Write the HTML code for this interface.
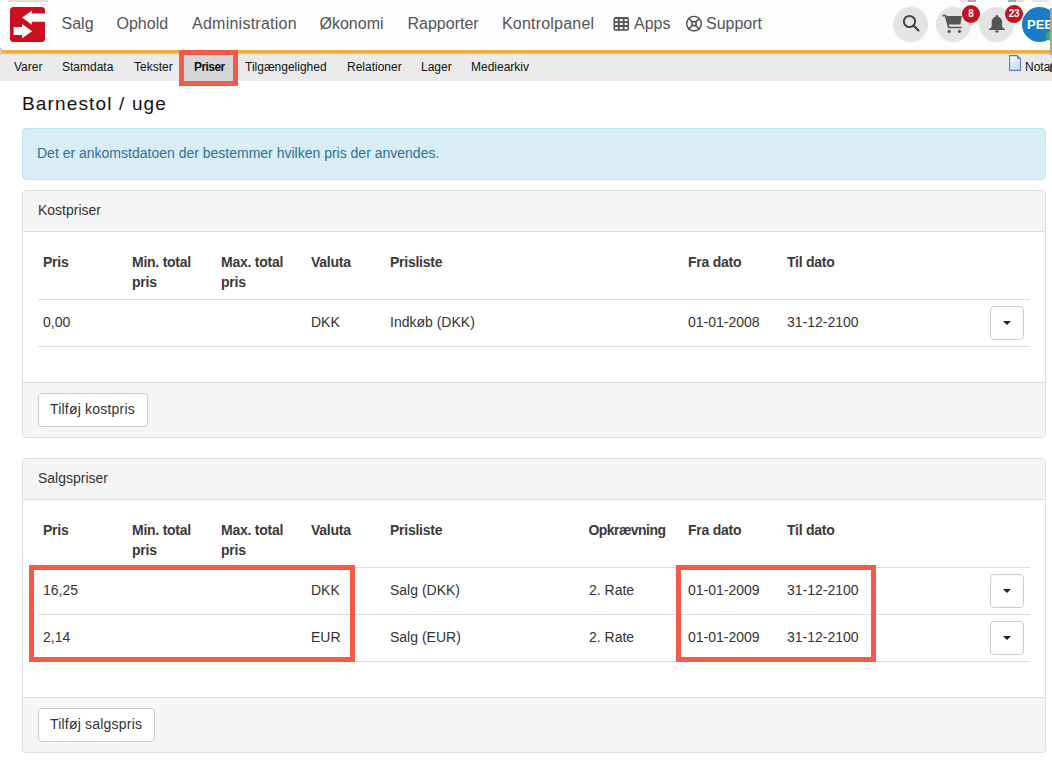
<!DOCTYPE html>
<html><head><meta charset="utf-8">
<style>
*{margin:0;padding:0;box-sizing:border-box}
html,body{width:1052px;height:764px;overflow:hidden;background:#fff;font-family:"Liberation Sans",sans-serif;color:#333;position:relative}
.a{position:absolute;white-space:nowrap}
.nav{font-size:16px;color:#555;line-height:20px;top:14px!important}
.sub{font-size:12px;color:#111;line-height:16px}
.t{font-size:14px;line-height:20px;color:#333}
.b{font-weight:bold;letter-spacing:-0.25px;color:#3a3a3a}
.circ{position:absolute;border-radius:50%;background:#e4e4e4;width:35px;height:35px}
.badge{position:absolute;border-radius:50%;background:#c8101e;width:18px;height:18px;color:#fff;font-size:10px;font-weight:bold;text-align:center;line-height:17px;letter-spacing:-0.2px}
.panel{position:absolute;left:22px;width:1024px;border:1px solid #ddd;border-radius:4px;background:#fff;overflow:hidden}
.ph{position:absolute;left:0;top:0;width:100%;background:#f5f5f5;border-bottom:1px solid #ddd}
.pf{position:absolute;left:0;width:100%;background:#f5f5f5;border-top:1px solid #ddd}
.hl{position:absolute;left:15px;width:992px;height:1px;background:#ddd}
.btn{position:absolute;border:1px solid #ccc;border-radius:4px;background:#fff}
.caret{position:absolute;left:12px;top:14px;width:0;height:0;border-left:4px solid transparent;border-right:4px solid transparent;border-top:4px solid #222}
.red{position:absolute;border:5px solid #f35a48}
</style></head><body>
<!-- top nav -->
<div class="a" style="left:0;top:0;width:1052px;height:50px;background:#fdfdfd"></div>
<svg class="a" style="left:10px;top:7px" width="35" height="35" viewBox="0 0 35 35">
<rect width="35" height="35" rx="3.5" fill="#c8101e"/>
<path d="M12.1 10.6 L21.8 3.8 L21.8 6.5 L35 6.5 L35 14.7 L21.8 14.7 L21.8 17.7 Z" fill="#fff"/>
<path d="M3.6 20 L12.1 20 L12.1 17.1 L22.1 24.2 L12.1 31.2 L12.1 28 L3.6 28 Z" fill="#fff"/>
</svg>
<div class="a nav" style="left:61.5px;top:13px">Salg</div>
<div class="a nav" style="left:116.5px;top:13px">Ophold</div>
<div class="a nav" style="left:192px;top:13px;letter-spacing:0.25px">Administration</div>
<div class="a nav" style="left:319.5px;top:13px">Økonomi</div>
<div class="a nav" style="left:407.5px;top:13px">Rapporter</div>
<div class="a nav" style="left:502px;top:13px;letter-spacing:0.2px">Kontrolpanel</div>
<svg class="a" style="left:613px;top:16px" width="17" height="16" viewBox="0 0 17 16">
<rect x="0.5" y="1" width="15.5" height="13.8" rx="2" fill="#555"/>
<g fill="#fdfdfd"><rect x="2" y="3" width="3" height="2.2" rx="0.6"/><rect x="6.8" y="3" width="3" height="2.2" rx="0.6"/><rect x="11.5" y="3" width="3" height="2.2" rx="0.6"/>
<rect x="2" y="6.9" width="3" height="2.2" rx="0.6"/><rect x="6.8" y="6.9" width="3" height="2.2" rx="0.6"/><rect x="11.5" y="6.9" width="3" height="2.2" rx="0.6"/>
<rect x="2" y="11" width="3" height="2.2" rx="0.6"/><rect x="6.8" y="11" width="3" height="2.2" rx="0.6"/><rect x="11.5" y="11" width="3" height="2.2" rx="0.6"/></g>
</svg>
<div class="a nav" style="left:634px;top:13px">Apps</div>
<svg class="a" style="left:685px;top:15px" width="18" height="18" viewBox="0 0 18 18">
<circle cx="9" cy="8.7" r="7.3" fill="none" stroke="#505050" stroke-width="1.4"/>
<circle cx="9" cy="8.7" r="2.15" fill="none" stroke="#505050" stroke-width="1.5"/>
<path d="M3.8 3.5L7.4 7.1M14.2 3.5L10.6 7.1M3.8 13.9L7.4 10.3M14.2 13.9L10.6 10.3" stroke="#505050" stroke-width="1.5" stroke-linecap="square"/>
</svg>
<div class="a nav" style="left:706px;top:13px">Support</div>

<div class="circ" style="left:893px;top:7px"></div>
<svg class="a" style="left:893px;top:7px" width="35" height="35" viewBox="0 0 35 35">
<circle cx="16.5" cy="14.5" r="5.6" fill="none" stroke="#444" stroke-width="2"/>
<path d="M20.5 18.5 L25.5 23.5" stroke="#444" stroke-width="2.2" stroke-linecap="round"/>
</svg>
<div class="circ" style="left:936px;top:7px"></div>
<svg class="a" style="left:936px;top:7px" width="35" height="35" viewBox="0 0 35 35">
<path d="M7.3 8.7 L9.6 8.7 L12.8 20.5 L24.9 20.5" fill="none" stroke="#555" stroke-width="1.7" stroke-linejoin="round" stroke-linecap="round"/>
<path d="M10.2 9 L25.8 9 L24.6 16.8 Q24.4 17.6 23.6 17.6 L12 17.6 Z" fill="#555"/>
<circle cx="13.2" cy="24.4" r="1.65" fill="#555"/>
<circle cx="23.4" cy="24.4" r="1.65" fill="#555"/>
</svg>
<div class="badge" style="left:962px;top:5px">8</div>
<div class="circ" style="left:979px;top:7px"></div>
<svg class="a" style="left:979px;top:7px" width="35" height="35" viewBox="0 0 35 35">
<circle cx="17.9" cy="9.2" r="1.3" fill="#555"/>
<path d="M17.9 9.8 C21.6 9.8 23.1 12.4 23.1 15.2 L23.1 19 C23.1 20.6 24.6 21.5 25.9 22.1 L25.9 22.9 L9.9 22.9 L9.9 22.1 C11.2 21.5 12.7 20.6 12.7 19 L12.7 15.2 C12.7 12.4 14.2 9.8 17.9 9.8 Z" fill="#555"/>
<path d="M15.9 23.6 L19.9 23.6 C19.6 25.1 18.8 25.8 17.9 25.8 C17 25.8 16.2 25.1 15.9 23.6 Z" fill="#555"/>
</svg>
<div class="badge" style="left:1005px;top:5px">23</div>
<div class="a" style="left:1022px;top:7px;width:35px;height:35px;border-radius:50%;background:#1a7bc6;color:#fff;font-weight:bold;font-size:13px;line-height:35px;padding-left:5px">PEB</div>
<div class="a" style="left:1046px;top:31px;width:10px;height:10px;border-radius:50%;background:#3bb54a"></div>


<div class="a" style="left:8px;top:0;width:40px;height:2px;background:#dcdfdc"></div>
<div class="a" style="left:960px;top:0;width:8px;height:2px;background:#e4e4e8"></div>
<div class="a" style="left:968px;top:0;width:8px;height:2px;background:#aaa"></div>
<div class="a" style="left:1008px;top:0;width:8px;height:2px;background:#aaa"></div>
<div class="a" style="left:1016px;top:0;width:8px;height:2px;background:#dde0dd"></div>
<div class="a" style="left:1032px;top:0;width:17px;height:2px;background:#e6e4ee"></div>
<!-- orange line -->
<div class="a" style="left:0;top:50px;width:1052px;height:5px;background:linear-gradient(#f2b445 0,#f0ad3c 20%,#f0ad3c 58%,#ead7b8 80%,#ebebeb 100%)"></div>
<div class="a" style="left:0;top:48px;width:2px;height:8px;background:#cbcfd3"></div>
<!-- subnav -->
<div class="a" style="left:0;top:55px;width:1052px;height:26px;background:#ebebeb"></div>
<div class="a" style="left:184px;top:55px;width:49px;height:26px;background:#d5d6d8"></div>
<div class="a sub" style="left:14px;top:59px">Varer</div>
<div class="a sub" style="left:62px;top:59px">Stamdata</div>
<div class="a sub" style="left:134px;top:59px">Tekster</div>
<div class="a sub" style="left:194px;top:59px;font-weight:bold;letter-spacing:-0.55px">Priser</div>
<div class="a sub" style="left:245px;top:59px">Tilgængelighed</div>
<div class="a sub" style="left:347px;top:59px">Relationer</div>
<div class="a sub" style="left:421px;top:59px">Lager</div>
<div class="a sub" style="left:471px;top:59px">Mediearkiv</div>
<svg class="a" style="left:1009px;top:55px" width="13" height="16" viewBox="0 0 13 16">
<defs><linearGradient id="dg" x1="0" y1="0" x2="0.6" y2="1"><stop offset="0" stop-color="#fff"/><stop offset="1" stop-color="#c4dcf8"/></linearGradient></defs>
<path d="M0.6 0.6 H8.2 L11.5 3.9 V15.4 H0.6 Z" fill="url(#dg)" stroke="#5580b0" stroke-width="1.1"/>
<path d="M8.2 0.6 V3.9 H11.5 Z" fill="#5580b0"/>
</svg>
<div class="a sub" style="left:1025px;top:59px">Notat</div>
<div class="red" style="left:179px;top:50px;width:59px;height:36px"></div>
<div class="a" style="left:1050px;top:8px;width:2px;height:47px;background:#a8a8a8"></div>
<div class="a" style="left:1050px;top:64px;width:2px;height:8px;background:#555"></div>

<!-- title -->
<div class="a" style="left:22px;top:93px;font-size:19px;line-height:22px;color:#111;letter-spacing:1.15px">Barnestol / uge</div>

<!-- alert -->
<div class="a" style="left:22px;top:128px;width:1024px;height:52px;background:#d9edf7;border:1px solid #bce8f1;border-radius:4px"></div>
<div class="a t" style="left:37px;top:143px;color:#31708f">Det er ankomstdatoen der bestemmer hvilken pris der anvendes.</div>

<!-- panel 1 -->
<div class="panel" style="top:190px;height:248px">
  <div class="ph" style="height:41px"></div>
  <div class="a t" style="left:15px;top:9px">Kostpriser</div>
  <div class="a t b" style="left:20px;top:61px">Pris</div>
  <div class="a t b" style="left:109px;top:61px">Min. total<br>pris</div>
  <div class="a t b" style="left:198px;top:61px">Max. total<br>pris</div>
  <div class="a t b" style="left:288px;top:61px">Valuta</div>
  <div class="a t b" style="left:367px;top:61px">Prisliste</div>
  <div class="a t b" style="left:665px;top:61px">Fra dato</div>
  <div class="a t b" style="left:764px;top:61px">Til dato</div>
  <div class="hl" style="top:108px"></div>
  <div class="a t" style="left:20px;top:121px">0,00</div>
  <div class="a t" style="left:288px;top:121px">DKK</div>
  <div class="a t" style="left:367px;top:121px">Indkøb (DKK)</div>
  <div class="a t" style="left:665px;top:121px">01-01-2008</div>
  <div class="a t" style="left:764px;top:121px">31-12-2100</div>
  <div class="btn" style="left:967px;top:115px;width:34px;height:34px"><div class="caret"></div></div>
  <div class="hl" style="top:155px"></div>
  <div class="pf" style="top:191px;height:57px"></div>
  <div class="btn" style="left:15px;top:202px;width:110px;height:34px"></div>
  <div class="a t" style="left:27px;top:208px;letter-spacing:0.2px">Tilføj kostpris</div>
</div>

<!-- panel 2 -->
<div class="panel" style="top:458px;height:295px">
  <div class="ph" style="height:41px"></div>
  <div class="a t" style="left:15px;top:9px">Salgspriser</div>
  <div class="a t b" style="left:20px;top:61px">Pris</div>
  <div class="a t b" style="left:109px;top:61px">Min. total<br>pris</div>
  <div class="a t b" style="left:198px;top:61px">Max. total<br>pris</div>
  <div class="a t b" style="left:288px;top:61px">Valuta</div>
  <div class="a t b" style="left:367px;top:61px">Prisliste</div>
  <div class="a t b" style="left:565.5px;top:61px;letter-spacing:-0.55px">Opkrævning</div>
  <div class="a t b" style="left:665px;top:61px">Fra dato</div>
  <div class="a t b" style="left:764px;top:61px">Til dato</div>
  <div class="hl" style="top:108px"></div>
  <div class="a t" style="left:20px;top:121px">16,25</div>
  <div class="a t" style="left:288px;top:121px">DKK</div>
  <div class="a t" style="left:367px;top:121px">Salg (DKK)</div>
  <div class="a t" style="left:566px;top:121px">2. Rate</div>
  <div class="a t" style="left:665px;top:121px">01-01-2009</div>
  <div class="a t" style="left:764px;top:121px">31-12-2100</div>
  <div class="btn" style="left:967px;top:115px;width:34px;height:34px"><div class="caret"></div></div>
  <div class="hl" style="top:155px"></div>
  <div class="a t" style="left:20px;top:168px">2,14</div>
  <div class="a t" style="left:288px;top:168px">EUR</div>
  <div class="a t" style="left:367px;top:168px">Salg (EUR)</div>
  <div class="a t" style="left:566px;top:168px">2. Rate</div>
  <div class="a t" style="left:665px;top:168px">01-01-2009</div>
  <div class="a t" style="left:764px;top:168px">31-12-2100</div>
  <div class="btn" style="left:967px;top:162px;width:34px;height:34px"><div class="caret"></div></div>
  <div class="hl" style="top:202px"></div>
  <div class="pf" style="top:238px;height:57px"></div>
  <div class="btn" style="left:15px;top:249px;width:117px;height:34px"></div>
  <div class="a t" style="left:27px;top:255px;letter-spacing:0.2px">Tilføj salgspris</div>
</div>
<div class="red" style="left:29px;top:565px;width:326px;height:97px"></div>
<div class="red" style="left:676px;top:565px;width:200px;height:97px"></div>
</body></html>
